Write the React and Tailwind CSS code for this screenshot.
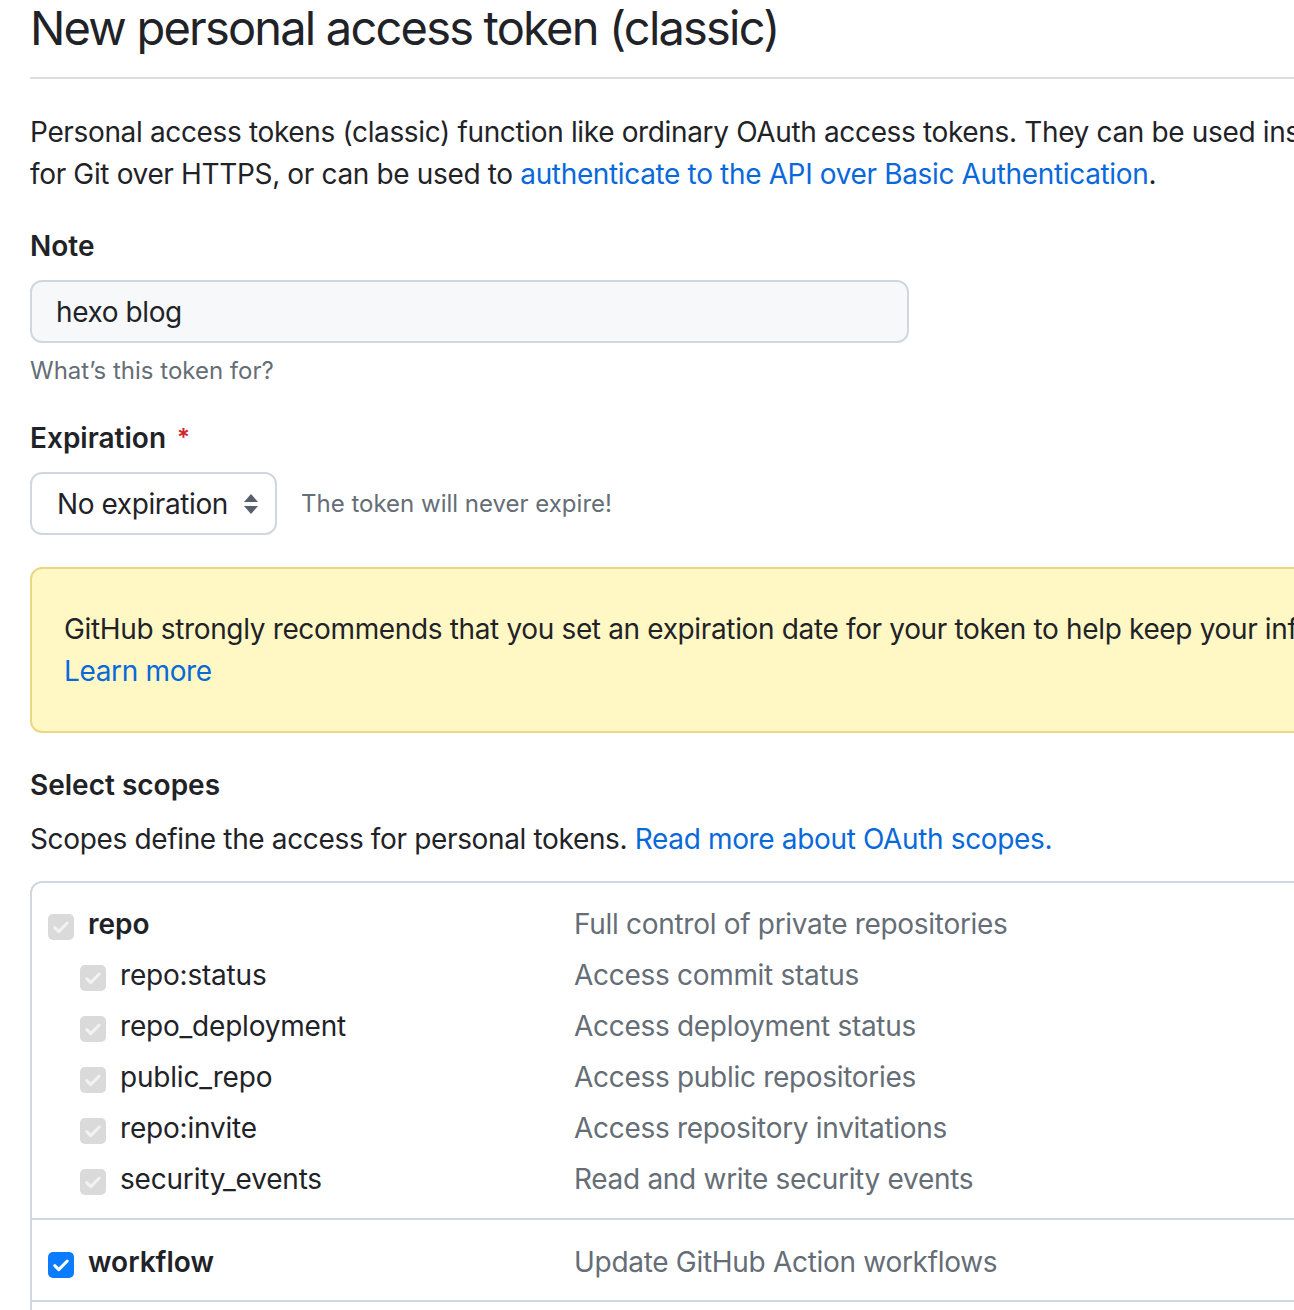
import React from 'react';

const repoScopes = [
  { name: 'repo:status', desc: 'Access commit status' },
  { name: 'repo_deployment', desc: 'Access deployment status' },
  { name: 'public_repo', desc: 'Access public repositories' },
  { name: 'repo:invite', desc: 'Access repository invitations' },
  { name: 'security_events', desc: 'Read and write security events' },
];

function Check({ checked }) {
  // disabled boxes are grey, the active one is blue
  return (
    <span
      className={
        'flex h-[26px] w-[26px] shrink-0 items-center justify-center rounded-[5px] ' +
        (checked ? 'bg-[#0b7bff]' : 'bg-[#dadada]')
      }
    >
      <svg width="20" height="20" viewBox="0 0 16 16" fill="none">
        <path
          d="M3 8.5l3.2 3.2L13 4.8"
          stroke={checked ? '#ffffff' : '#f2f2f2'}
          strokeWidth="2.4"
          strokeLinecap="round"
          strokeLinejoin="round"
        />
      </svg>
    </span>
  );
}

function ScopeRow({ name, desc, bold, sub, checked }) {
  return (
    <div className="flex h-[51px] items-center">
      <div className={'flex w-[542px] items-center ' + (sub ? 'pl-[48px]' : 'pl-[16px]')}>
        <span className="mt-[6px]">
          <Check checked={checked} />
        </span>
        <span
          className={
            'ml-[14px] text-[28px] text-[#1f2328] ' +
            (bold ? 'font-semibold' : 'tracking-[-0.2px]')
          }
        >
          {name}
        </span>
      </div>
      <span className="text-[28px] tracking-[-0.3px] text-[#656d76]">{desc}</span>
    </div>
  );
}

export default function App() {
  return (
    <div
      className="h-[1310px] w-[1294px] overflow-hidden bg-white text-[#1f2328]"
      style={{ fontFamily: 'Inter, "Noto Sans", sans-serif' }}
    >
      <div className="w-[1600px] pl-[30px]">
        {/* Header */}
        <div className="border-b-2 border-[#d8dee4] pt-[2px] pb-[23px]">
          <h2 className="text-[47px] leading-[52px] font-normal tracking-[-1.8px]">
            New personal access token (classic)
          </h2>
        </div>

        <p className="mt-[32px] text-[28px] leading-[42px] tracking-[-0.35px]">
          Personal access tokens (classic) function like ordinary OAuth access tokens. They can be used instead of a password
          <br />
          for Git over HTTPS, or can be used to{' '}
          <a className="text-[#0969da]">authenticate to the API over Basic Authentication</a>.
        </p>

        {/* Note */}
        <div className="mt-[30px]">
          <label className="block text-[28px] leading-[42px] font-semibold">Note</label>
          <div className="mt-[13px] flex h-[63px] w-[879px] items-center rounded-[12px] border-2 border-[#d0d7de] bg-[#f6f8fa] px-[24px] text-[28px] tracking-[-0.4px]">
            hexo blog
          </div>
          <p className="mt-[10px] text-[24px] leading-[36px] text-[#656d76]">What’s this token for?</p>
        </div>

        {/* Expiration */}
        <div className="mt-[28px]">
          <label className="flex items-center text-[28px] leading-[42px] font-semibold">
            Expiration
            <span className="ml-[11px] text-[24px] text-[#d1242f]">*</span>
          </label>
          <div className="mt-[13px] flex items-center">
            <div className="flex h-[63px] w-[247px] items-center rounded-[12px] border-2 border-[#d0d7de] bg-white pl-[25px] pr-[16px] text-[28px] tracking-[-0.4px]">
              <span className="flex-1">No expiration</span>
              <svg width="16" height="24" viewBox="0 0 16 24">
                <path d="M8 2l7 8H1z" fill="#57606a" />
                <path d="M8 22l7-8H1z" fill="#57606a" />
              </svg>
            </div>
            <span className="ml-[24px] text-[24px] text-[#656d76]">The token will never expire!</span>
          </div>
        </div>

        {/* Warning */}
        <div className="mt-[32px] rounded-[12px] border-2 border-[#ecd684] bg-[#fff8c5] px-[32px] py-[39px] text-[28px] leading-[42px] tracking-[-0.35px]">
          GitHub strongly recommends that you set an expiration date for your token to help keep your information secure.
          <br />
          <a className="text-[#0969da]">Learn more</a>
        </div>

        {/* Scopes */}
        <div className="mt-[31px]">
          <label className="block text-[28px] leading-[42px] font-semibold">Select scopes</label>
          <p className="mt-[12px] text-[28px] leading-[42px] tracking-[-0.35px]">
            Scopes define the access for personal tokens.{' '}
            <a className="text-[#0969da]">Read more about OAuth scopes.</a>
          </p>

          <div className="mt-[21px] rounded-[12px] border-2 border-[#d0d7de]">
            <div className="pt-[15px] pb-[14px]">
              <ScopeRow name="repo" desc="Full control of private repositories" bold />
              {repoScopes.map((s) => (
                <ScopeRow key={s.name} name={s.name} desc={s.desc} sub />
              ))}
            </div>
            <div className="border-t-2 border-[#d0d7de] pt-[16px] pb-[13px]">
              <ScopeRow name="workflow" desc="Update GitHub Action workflows" bold checked />
            </div>
            <div className="h-[60px] border-t-2 border-[#d0d7de]" />
          </div>
        </div>
      </div>
    </div>
  );
}
